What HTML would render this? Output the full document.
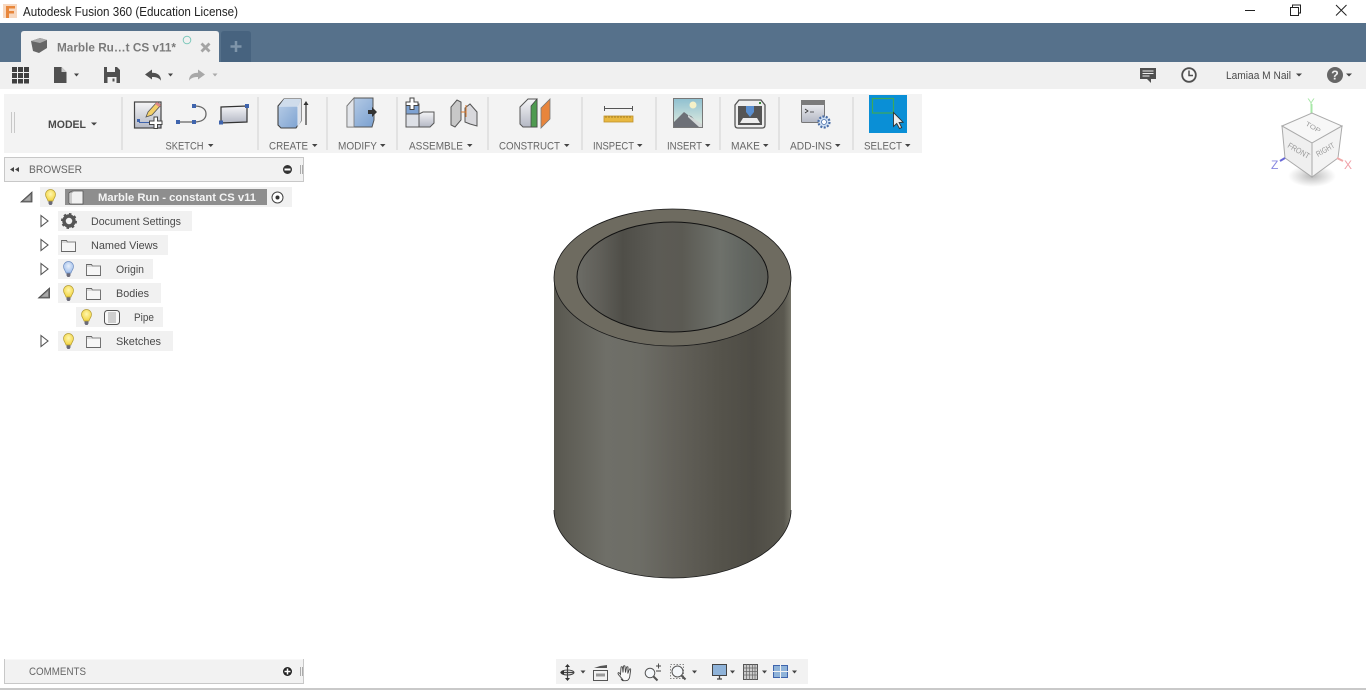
<!DOCTYPE html>
<html><head><meta charset="utf-8"><title>Autodesk Fusion 360</title>
<style>
html,body{margin:0;padding:0;background:#fff;width:1366px;height:690px;overflow:hidden}
svg{display:block;position:absolute;left:0;top:0}
text{font-family:"Liberation Sans",sans-serif;font-size:11px;fill:#555}
.t{fill:#666;font-size:11px}
.b{fill:#4a4a4a;font-size:11px}
</style></head><body>
<svg width="1366" height="690" viewBox="0 0 1366 690" xmlns="http://www.w3.org/2000/svg">
<defs>
<linearGradient id="side" x1="554" x2="791" y1="0" y2="0" gradientUnits="userSpaceOnUse">
<stop offset="0" stop-color="#58574f"/><stop offset=".06" stop-color="#5f5e56"/><stop offset=".22" stop-color="#6f6f68"/><stop offset=".36" stop-color="#6d6d66"/><stop offset=".5" stop-color="#63615a"/><stop offset=".7" stop-color="#55534b"/><stop offset=".84" stop-color="#4e4c45"/><stop offset=".97" stop-color="#5a584f"/><stop offset="1" stop-color="#77766b"/>
</linearGradient>
<linearGradient id="inner" x1="577" x2="768" y1="0" y2="0" gradientUnits="userSpaceOnUse">
<stop offset="0" stop-color="#6c6c66"/><stop offset=".12" stop-color="#605f59"/><stop offset=".24" stop-color="#4f4e48"/><stop offset=".42" stop-color="#5c5b55"/><stop offset=".55" stop-color="#5b5a53"/><stop offset=".75" stop-color="#6e716b"/><stop offset=".88" stop-color="#616560"/><stop offset="1" stop-color="#5d5e58"/>
</linearGradient>
<linearGradient id="blue" x1="0" x2="1" y1="0" y2="1"><stop offset="0" stop-color="#bcd0e8"/><stop offset="1" stop-color="#7aa0d0"/></linearGradient>
<linearGradient id="grey" x1="0" x2="0" y1="0" y2="1"><stop offset="0" stop-color="#f5f5f7"/><stop offset="1" stop-color="#b4b8c4"/></linearGradient>
<linearGradient id="sky" x1="0" x2="0" y1="0" y2="1"><stop offset="0" stop-color="#8fc0d0"/><stop offset="1" stop-color="#e4eee0"/></linearGradient>
<radialGradient id="bulb" cx=".5" cy=".4" r=".6"><stop offset="0" stop-color="#fff7b0"/><stop offset="1" stop-color="#f2d33e"/></radialGradient>
<radialGradient id="bulbb" cx=".5" cy=".4" r=".6"><stop offset="0" stop-color="#e8f0fb"/><stop offset="1" stop-color="#9dbcea"/></radialGradient>
<radialGradient id="shadow" cx=".5" cy=".5" r=".5"><stop offset="0" stop-color="#888" stop-opacity=".6"/><stop offset="1" stop-color="#999" stop-opacity="0"/></radialGradient>
<g id="bl"><path d="M-2 5h4v2.500l-1 1.500h-2l-1-1.500z" fill="#6a6a78"/><path d="M-2.500 5C-3 2.500-5 1.500-5-1.500a5 5 0 0 1 10 0C5 1.500 3 2.500 2.500 5z" fill="url(#bulb)" stroke="#b39c36" stroke-width=".7"/></g>
<g id="blb"><path d="M-2 5h4v2.500l-1 1.500h-2l-1-1.500z" fill="#6a6a78"/><path d="M-2.500 5C-3 2.500-5 1.500-5-1.500a5 5 0 0 1 10 0C5 1.500 3 2.500 2.500 5z" fill="url(#bulbb)" stroke="#6c8cc0" stroke-width=".7"/></g>
<g id="fd"><path d="M.5 2.500h5l1 1.500h8v9.500h-14z" fill="#f6f6f6" stroke="#666" stroke-width=".9"/><path d="M.5 4h14" stroke="#999" stroke-width=".6"/></g>
<g id="ro"><path d="M-3.500-5.500L3.500 0-3.500 5.500z" fill="#fff" stroke="#555" stroke-width="1.100"/></g>
<g id="ex"><path d="M5-5V5H-6z" fill="#777" stroke="#444" stroke-width=".8"/><path d="M3.500-2V3.800H-3z" fill="#aaa"/></g>
</defs>

<!-- Title bar -->
<rect x="3" y="4" width="14" height="14" fill="#f7d8c0"/>
<path d="M6 6h9v2.500H9V11h5v2.500H9V18H6z" fill="#e8873c"/>
<text x="23" y="16" style="font-size:12.500px;fill:#222" textLength="215" lengthAdjust="spacingAndGlyphs">Autodesk Fusion 360 (Education License)</text>
<path d="M1245 10.500h10" stroke="#222" stroke-width="1"/>
<path d="M1290.500 7.500h8v8h-8zM1292.500 7.500v-2.500h8v8h-2" fill="none" stroke="#222" stroke-width="1"/>
<path d="M1336 5l10.500 10.500M1346.500 5L1336 15.500" stroke="#222" stroke-width="1"/>

<!-- Blue band -->
<rect x="0" y="23" width="1366" height="39" fill="#56718b"/>
<path d="M21 62V34q0-3 3-3h192q3 0 3 3v28z" fill="#f0f0f0"/>
<path d="M221 62V34q0-3 3-3h24q3 0 3 3v28z" fill="#47637f"/>
<path d="M236 41v11M230.500 46.500h11" stroke="#7f95aa" stroke-width="2.500"/>
<path d="M31 41l9-3 7 2v8l-8 5-6-2z" fill="#666"/><path d="M31 41l9 2 7-3-7-2z" fill="#aaa"/>
<text x="57" y="51.500" style="font-size:12px;font-weight:bold;fill:#7a7a7a" textLength="119" lengthAdjust="spacingAndGlyphs">Marble Ru…t CS v11*</text>
<circle cx="187" cy="40" r="3.800" fill="none" stroke="#7cc8bb" stroke-width="1"/>
<path d="M201.500 43.500l8 8M209.500 43.500l-8 8" stroke="#a4a4a4" stroke-width="2.800"/>

<!-- Quick access bar -->
<rect x="0" y="62" width="1366" height="27" fill="#f0f0f0"/>
<path fill="#404040" d="M12 67h5v5h-5zM18 67h5v5h-5zM24 67h5v5h-5zM12 73h5v5h-5zM18 73h5v5h-5zM24 73h5v5h-5zM12 79h5v4.500h-5zM18 79h5v4.500h-5zM24 79h5v4.500h-5z"/>
<path d="M54 67h7.500l5 5v11H54z" fill="#505050"/><path d="M61.500 67v5h5z" fill="#ccc"/>
<path d="M74 73.500h5l-2.500 3z" fill="#444"/>
<path d="M104 67h13l3 3v13h-16z" fill="#505050"/><path d="M107 67h8v5h-8zM107.500 77h9v6h-9z" fill="#f0f0f0"/><rect x="112.500" y="78.500" width="2" height="3" fill="#505050"/>
<path d="M145 74.500l7-5v3.200c5 0 9 2 9 8-2-3-5-3.700-9-3.700v2.500z" fill="#505050"/>
<path d="M168 73.500h5l-2.500 3z" fill="#444"/>
<path d="M205 74.500l-7-5v3.200c-5 0-9 2-9 8 2-3 5-3.700 9-3.700v2.500z" fill="#a8a8a8"/>
<path d="M212.500 73.500h5l-2.500 3z" fill="#aaa"/>

<path d="M1140 68h16v11h-5v4l-4-4h-7z" fill="#505050"/><path d="M1142.500 71h11M1142.500 73.500h11M1142.500 76h7" stroke="#f0f0f0" stroke-width="1"/>
<circle cx="1189" cy="75" r="6.800" fill="#f6f6f6" stroke="#505050" stroke-width="1.800"/><path d="M1189 70.500V75.500h4" fill="none" stroke="#505050" stroke-width="1.500"/>
<text x="1226" y="79" class="b" textLength="65" lengthAdjust="spacingAndGlyphs">Lamiaa M Nail</text>
<path d="M1296 73.500h6l-3 3z" fill="#444"/>
<circle cx="1335" cy="75" r="8" fill="#666"/><text x="1335" y="79.500" text-anchor="middle" style="font-size:12.500px;font-weight:bold;fill:#f0f0f0">?</text>
<path d="M1346 73.500h6l-3 3z" fill="#444"/>

<!-- Ribbon -->
<rect x="4" y="94" width="918" height="59" fill="#f3f3f3"/>
<path d="M11.500 112v21M14.500 112v21" stroke="#c8c8c8" stroke-width="1"/>
<g stroke="#e2e2e2" stroke-width="2"><path d="M122 97v53M258 97v53M327 97v53M397 97v53M488 97v53M582 97v53M656 97v53M720 97v53M779 97v53M853 97v53"/></g>
<text x="48" y="128" style="font-weight:bold;fill:#4a4a4a" textLength="38" lengthAdjust="spacingAndGlyphs">MODEL</text>
<path d="M91 122.500h6l-3 3z" fill="#444"/>

<text x="165.500" y="149.500" class="t" textLength="38" lengthAdjust="spacingAndGlyphs">SKETCH</text>
<text x="269" y="149.500" class="t" textLength="39" lengthAdjust="spacingAndGlyphs">CREATE</text>
<text x="338" y="149.500" class="t" textLength="39" lengthAdjust="spacingAndGlyphs">MODIFY</text>
<text x="409" y="149.500" class="t" textLength="54" lengthAdjust="spacingAndGlyphs">ASSEMBLE</text>
<text x="499" y="149.500" class="t" textLength="61" lengthAdjust="spacingAndGlyphs">CONSTRUCT</text>
<text x="593" y="149.500" class="t" textLength="41" lengthAdjust="spacingAndGlyphs">INSPECT</text>
<text x="667" y="149.500" class="t" textLength="35" lengthAdjust="spacingAndGlyphs">INSERT</text>
<text x="731" y="149.500" class="t" textLength="29" lengthAdjust="spacingAndGlyphs">MAKE</text>
<text x="790" y="149.500" class="t" textLength="42" lengthAdjust="spacingAndGlyphs">ADD-INS</text>
<text x="864" y="149.500" class="t" textLength="38" lengthAdjust="spacingAndGlyphs">SELECT</text>
<path fill="#444" d="M208 144h5.500l-2.750 3zM312 144h5.500l-2.750 3zM380 144h5.500l-2.750 3zM467 144h5.500l-2.750 3zM564 144h5.500l-2.750 3zM637 144h5.500l-2.750 3zM705 144h5.500l-2.750 3zM763 144h5.500l-2.750 3zM835 144h5.500l-2.750 3zM905 144h5.500l-2.750 3z"/>

<!-- Sketch icon -->
<rect x="134.500" y="102" width="26.500" height="26" fill="url(#grey)" stroke="#444" stroke-width="1.200"/>
<path d="M146 117l2-5 9-10 4 3-9 10z" fill="#f3d06a" stroke="#555" stroke-width=".8"/><path d="M155 104l4 3 2-2-4-3z" fill="#d88"/>
<rect x="137" y="119" width="3" height="3" fill="#3f64ad"/><path d="M139 122.500h11" stroke="#3f64ad"/>
<path d="M154 117h3.500v4h4.500v3.500h-4.500v4H154v-4h-4.500V121h4.500z" fill="#fff" stroke="#444" stroke-width="1"/>
<path d="M178 122h16c8 0 12-3 12-8s-4-8-12-8" fill="none" stroke="#666" stroke-width="1.300"/>
<path fill="#3f64ad" d="M176 120h4v4h-4zM192 120h4v4h-4zM192 104h4v4h-4z"/>
<path d="M221 107l26-1v16l-26 1z" fill="url(#grey)" stroke="#333" stroke-width="1.200"/>
<path fill="#3f64ad" d="M219 120.500h4v4h-4zM245 104h4v4h-4z"/>

<!-- Create -->
<path d="M278 106l6-7h17v22l-5 7h-15l-3-3z" fill="url(#blue)" stroke="#444" stroke-width="1.100"/><path d="M279 106h19v21" fill="none" stroke="#e8eef5" stroke-width="1"/><path d="M298 106l3-7v22l-3 6z" fill="#dfe3ea"/><path d="M284 99h17l-3 7h-19z" fill="#cfdceb"/>
<path d="M306 125V103" stroke="#333" stroke-width="1.200"/><path d="M303.500 105l2.500-4 2.500 4z" fill="#333"/>

<!-- Modify -->
<path d="M347 106l7-8h19v14h1v8l-2 7h-25z" fill="url(#blue)" stroke="#555" stroke-width="1"/><path d="M347 127v-21l7-8v29z" fill="#e2e5ea" stroke="#777" stroke-width=".8"/>
<path d="M368 110h4v-3l5 5-5 5v-3h-4z" fill="#333"/>

<!-- Assemble -->
<path d="M406 114h13v13h-13z" fill="#dde0e6" stroke="#555" stroke-width="1"/>
<path d="M419 114l4-2h11l0 11-4 4h-11z" fill="url(#grey)" stroke="#555" stroke-width="1"/>
<path d="M406 104h13v10h-13z" fill="#7ea2d2" stroke="#555" stroke-width="1"/>
<path d="M410 98h4v4h4v3.500h-4v4h-4v-4h-4V102h4z" fill="#fff" stroke="#444"/>
<path d="M451 125v-18l6-7 4 2v18l-6 7z" fill="#c8c8c8" stroke="#555"/><path d="M465 108l5-4 7 8v14l-7-2-5-2z" fill="#d8d8dc" stroke="#555"/><path d="M466 105v12M461 112h5" stroke="#d97a2e"/>

<!-- Construct -->
<path d="M520 107l8-8h9v28h-14l-3-3z" fill="url(#grey)" stroke="#555"/><path d="M531 106l6-7v28h-6z" fill="#4f9a50" stroke="#444" stroke-width=".7"/>
<path d="M541 108l9-9v20l-9 9z" fill="#e8853c" stroke="#777" stroke-width=".8"/>

<!-- Inspect -->
<path d="M604.500 108.500h28M604.500 106v5M632.500 106v5" stroke="#555" stroke-width="1"/>
<rect x="604" y="116" width="29" height="6" fill="#e8b840" stroke="#c0902a" stroke-width=".8"/>
<path d="M606 116v2M609 116v2M612 116v2M615 116v2M618 116v2M621 116v2M624 116v2M627 116v2M630 116v2" stroke="#8a6a1a" stroke-width=".7"/>

<!-- Insert -->
<rect x="673.500" y="98.500" width="29" height="29" fill="url(#sky)" stroke="#777"/>
<circle cx="693" cy="105" r="3.500" fill="#f5f1c8"/>
<path d="M674 127v-5l10-10 4 3 3 1 11 11z" fill="#6d7077"/><path d="M688 115l14 9v3h-3l-11-10z" fill="#d3d8d8"/>

<!-- Make -->
<path d="M735 105l4-5h22l4 5v20q0 3-3 3h-24q-3 0-3-3z" fill="#eee" stroke="#555" stroke-width="1.300"/>
<rect x="738" y="106" width="24" height="19" fill="#555"/>
<path d="M746 106h8v6l-4 5-4-5z" fill="#5a8fd0"/><path d="M743 118h14l3 5h-20z" fill="#eee"/><rect x="759" y="102" width="2" height="2" fill="#3a8a3a"/>

<!-- Add-ins -->
<rect x="801.500" y="100.500" width="23" height="22" rx="1" fill="url(#grey)" stroke="#777"/><rect x="801" y="100" width="24" height="5" fill="#7b7b7b"/>
<path d="M805 109l3 2-3 2M810 112h4" stroke="#333" fill="none" stroke-width=".8"/>
<circle cx="824" cy="122" r="5.500" fill="#cfe0f4" stroke="#4a6ea8" stroke-width="2.200" stroke-dasharray="2 1.450"/><circle cx="824" cy="122" r="2.500" fill="#fff" stroke="#4a6ea8" stroke-width=".8"/>

<!-- Select -->
<rect x="869" y="95" width="38" height="38" fill="#0a8fd6"/>
<rect x="872.500" y="98.500" width="21" height="14.500" fill="none" stroke="#3da85a" stroke-width="1.200"/>
<path d="M893.500 112.500v14l3.200-3 2.800 5 2.200-1-2.600-5 4-.3z" fill="#eee" stroke="#333" stroke-width=".9"/>

<!-- Viewcube -->
<ellipse cx="1312" cy="176" rx="24" ry="11" fill="url(#shadow)"/>
<path d="M1311.500 104v9" stroke="#a8e8a8" stroke-width="2"/>
<text x="1311" y="106" text-anchor="middle" style="font-size:11px;fill:#a6e6a6">Y</text>
<path d="M1282 126l30-13 30 13-30 17z" fill="#f7f7f7" stroke="#aaa"/>
<path d="M1282 126l30 17v34l-27-19z" fill="#efefef" stroke="#aaa"/>
<path d="M1312 143l30-17-4 32-26 19z" fill="#f3f3f3" stroke="#aaa"/>
<text transform="translate(1305 125) rotate(30) scale(1 .8)" style="font-size:8px;fill:#999">TOP</text>
<text transform="translate(1287 147) rotate(30)" style="font-size:8px;fill:#999" textLength="24" lengthAdjust="spacingAndGlyphs">FRONT</text>
<text transform="translate(1318 157) rotate(-30)" style="font-size:8px;fill:#999" textLength="20" lengthAdjust="spacingAndGlyphs">RIGHT</text>
<path d="M1280 161l5-3" stroke="#6868d8" stroke-width="2"/><path d="M1337 158l6 3" stroke="#f0a8a8" stroke-width="2"/>
<text x="1271" y="169" style="font-size:12px;fill:#8888e0">Z</text>
<text x="1344" y="169" style="font-size:12px;fill:#f0a0a8">X</text>

<!-- Browser -->
<rect x="4.500" y="157.500" width="299" height="24" fill="#f2f2f2" stroke="#c8c8c8"/>
<path d="M14 167l-4 2.500 4 2.500zM19 167l-4 2.500 4 2.500z" fill="#444"/>
<text x="29" y="173" style="fill:#666" textLength="53" lengthAdjust="spacingAndGlyphs">BROWSER</text>
<circle cx="287.500" cy="169.500" r="4.500" fill="#333"/><rect x="284.500" y="168.500" width="6" height="2" fill="#fff"/>
<path d="M300.500 165v9M302.500 165v9" stroke="#999" stroke-width=".8"/>

<rect x="40" y="187" width="252" height="20" fill="#f1f1f1"/>
<rect x="65" y="189" width="202" height="16" fill="#8e8e8e"/>
<use href="#ex" transform="translate(27 197)"/>
<use href="#bl" transform="translate(50.500 196)"/>
<path d="M69 193l3-2h11v13H70l-1-1z" fill="#f0f0f0" stroke="#555" stroke-width=".8"/><path d="M71 204v-11l3-2" fill="none" stroke="#888" stroke-width=".7"/>
<text x="98" y="201" style="font-weight:bold;fill:#f4f4f4" textLength="158" lengthAdjust="spacingAndGlyphs">Marble Run - constant CS v11</text>
<circle cx="277.500" cy="197.500" r="5.500" fill="#fff" stroke="#444" stroke-width="1"/><circle cx="277.500" cy="197.500" r="2" fill="#333"/>

<rect x="58" y="211" width="134" height="20" fill="#f1f1f1"/>
<use href="#ro" transform="translate(44.500 221)"/>
<circle cx="69" cy="221" r="5" fill="none" stroke="#555" stroke-width="3.500"/><circle cx="69" cy="221" r="7" fill="none" stroke="#555" stroke-width="2" stroke-dasharray="2.500 2.950"/>
<text x="91" y="225" class="b" textLength="90" lengthAdjust="spacingAndGlyphs">Document Settings</text>

<rect x="58" y="235" width="110" height="20" fill="#f1f1f1"/>
<use href="#ro" transform="translate(44.500 245)"/>
<use href="#fd" transform="translate(61 238)"/>
<text x="91" y="249" class="b" textLength="67" lengthAdjust="spacingAndGlyphs">Named Views</text>

<rect x="58" y="259" width="95" height="20" fill="#f1f1f1"/>
<use href="#ro" transform="translate(44.500 269)"/>
<use href="#blb" transform="translate(68.500 268)"/>
<use href="#fd" transform="translate(86 262)"/>
<text x="116" y="273" class="b" textLength="28" lengthAdjust="spacingAndGlyphs">Origin</text>

<rect x="58" y="283" width="103" height="20" fill="#f1f1f1"/>
<use href="#ex" transform="translate(44.500 293)"/>
<use href="#bl" transform="translate(68.500 292)"/>
<use href="#fd" transform="translate(86 286)"/>
<text x="116" y="297" class="b" textLength="33" lengthAdjust="spacingAndGlyphs">Bodies</text>

<rect x="76" y="307" width="87" height="20" fill="#f1f1f1"/>
<use href="#bl" transform="translate(86.500 316)"/>
<rect x="104.500" y="310.500" width="15" height="14" rx="3" fill="#f8f8f8" stroke="#555"/><rect x="108" y="312" width="8" height="11" fill="#cfcfcf"/>
<text x="134" y="321" class="b" textLength="20" lengthAdjust="spacingAndGlyphs">Pipe</text>

<rect x="58" y="331" width="115" height="20" fill="#f1f1f1"/>
<use href="#ro" transform="translate(44.500 341)"/>
<use href="#bl" transform="translate(68.500 340)"/>
<use href="#fd" transform="translate(86 334)"/>
<text x="116" y="345" class="b" textLength="45" lengthAdjust="spacingAndGlyphs">Sketches</text>

<!-- Cylinder -->
<path d="M554 277V510A118.500 68 0 0 0 791 510V277z" fill="url(#side)"/>
<path d="M554 510A118.500 68 0 0 0 791 510" fill="none" stroke="#1a1a1a" stroke-width=".8"/>
<ellipse cx="672.500" cy="277.500" rx="118.500" ry="68.500" fill="#6e6b60" stroke="#1a1a1a" stroke-width=".8"/>
<ellipse cx="672.500" cy="277" rx="95.500" ry="55" fill="url(#inner)" stroke="#111" stroke-width="1"/>

<!-- Comments -->
<rect x="4.500" y="659.500" width="299" height="24" fill="#f2f2f2"/>
<path d="M4.500 659v25M4 683.500h300M303.500 659v25" stroke="#c8c8c8" fill="none"/>
<text x="29" y="675" style="fill:#666" textLength="57" lengthAdjust="spacingAndGlyphs">COMMENTS</text>
<circle cx="287.500" cy="671.500" r="4.500" fill="#222"/><path d="M284.500 671.500h6M287.500 668.500v6" stroke="#fff" stroke-width="1.500"/>
<path d="M300.500 667v9M302.500 667v9" stroke="#999" stroke-width=".8"/>

<!-- Nav bar -->
<rect x="556" y="659" width="252" height="25" fill="#f2f2f2"/>
<path d="M567.500 665v14M561 672.500h13" stroke="#444" stroke-width="1.200"/><ellipse cx="567.500" cy="672.500" rx="6.500" ry="2.500" fill="none" stroke="#444"/><path d="M565 667l2.500-3 2.500 3zM565 678l2.500 3 2.500-3zM564 670.500v4l-4-2z" fill="#333"/>
<path d="M580.500 670.500h5l-2.500 3z" fill="#444"/>
<rect x="593.500" y="670.500" width="14" height="10" fill="#f2f2f2" stroke="#555"/><rect x="596" y="673.500" width="9" height="3" fill="#999"/><path d="M594 668l6-2 7-1v3z" fill="#555"/>
<path d="M623 680c-2-3-5-5-5-6.500s1.500-1 2.500 1l.5-7c0-1 1.500-1 1.500 0l.5 5 .5-6c0-1 1.500-1 1.500 0l.5 6 1-5c.2-1 1.500-1 1.500 0l-.2 6 1.500-4c.4-1 1.500-.8 1.400.2l-1 7c-.5 3-2 4-4 4h-2.500c-.8 0-1.200-.4-1.700-1.200z" fill="#f8f8f8" stroke="#444" stroke-width=".9"/>
<circle cx="650" cy="673" r="4.800" fill="#f4f7fa" stroke="#555"/><path d="M653.500 676.500l4 4" stroke="#555" stroke-width="2"/><path d="M656 666h5M658.500 663.500v5M656 671h5" stroke="#444" stroke-width=".9"/>
<rect x="670.500" y="664.500" width="13" height="14" fill="none" stroke="#888" stroke-dasharray="1.500 1.500"/><circle cx="677.500" cy="671.500" r="5.500" fill="#f4f7fa" stroke="#555"/><path d="M681.500 675.500l4 4" stroke="#555" stroke-width="2"/>
<path d="M692 670.500h5l-2.500 3z" fill="#444"/>
<rect x="712.500" y="664.500" width="14" height="11" fill="#8fb3d9" stroke="#444"/><path d="M717 679h5M719.500 676v3" stroke="#444" stroke-width="1.300"/>
<path d="M730 670.500h5l-2.500 3z" fill="#444"/>
<rect x="743.500" y="664.500" width="14" height="15" fill="#ccc" stroke="#555"/><path d="M746.500 664v16M749.500 664v16M752.500 664v16M755 664v16M743 668h15M743 671.500h15M743 675h15" stroke="#666" stroke-width=".7"/>
<path d="M762 670.500h5l-2.500 3z" fill="#444"/>
<rect x="773.500" y="665.500" width="14" height="12" fill="#8fb3d9" stroke="#3f64ad"/><path d="M780.500 665v13M773 671.500h15" stroke="#f2f2f2"/>
<path d="M792 670.500h5l-2.500 3z" fill="#444"/>

<!-- Bottom strip -->
<rect x="0" y="688" width="1366" height="2" fill="#c9c9c9"/>
</svg>
</body></html>
